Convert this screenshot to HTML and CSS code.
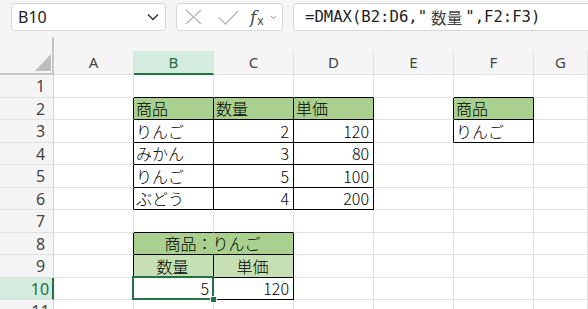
FILE: index.html
```html
<!DOCTYPE html>
<html>
<head>
    <title>DMAX</title>
    <link rel="stylesheet" href="styles.css">
</head>
<body>
    <div class="toolbar">
        <div class="namebox">
            <span class="ref">B10</span>
            <svg class="chev" width="12" height="8" viewBox="0 0 12 8"><path d="M1 1.5 6 6.5 11 1.5"/></svg>
        </div>
        <div class="fxbox">
            <svg class="ico cancel" width="17" height="16" viewBox="0 0 17 16"><path d="M1 1 16 15M16 1 1 15"/></svg>
            <svg class="ico ok" width="21" height="15" viewBox="0 0 21 15"><path d="M1 7.5 7.5 14 20 1"/></svg>
            <span class="fx"><i>f</i><span class="fx-x">x</span></span>
            <svg class="mini" width="7" height="5" viewBox="0 0 7 5"><path d="M1 1 3.5 3.5 6 1"/></svg>
        </div>
        <div class="formula">=DMAX(B2:D6,"<span class="wide">数量</span>",F2:F3)</div>
    </div>

    <div class="sheet">
        <!-- column headers -->
        <div class="c corner"><svg width="16" height="17" viewBox="0 0 16 17"><polygon points="16,0 16,17 0,17"/></svg></div>
        <div class="c ch">A</div>
        <div class="c ch sel">B</div>
        <div class="c ch">C</div>
        <div class="c ch">D</div>
        <div class="c ch">E</div>
        <div class="c ch">F</div>
        <div class="c ch">G</div>

        <!-- 1 -->
        <div class="c rh">1</div>
        <div class="c"></div>
        <div class="c bb"></div>
        <div class="c bb"></div>
        <div class="c bb"></div>
        <div class="c"></div>
        <div class="c bb"></div>
        <div class="c"></div>

        <!-- 2 -->
        <div class="c rh">2</div>
        <div class="c br"></div>
        <div class="c bx hd">商品</div>
        <div class="c bx hd">数量</div>
        <div class="c bx hd">単価</div>
        <div class="c br"></div>
        <div class="c bx hd">商品</div>
        <div class="c"></div>

        <!-- 3 -->
        <div class="c rh">3</div>
        <div class="c br"></div>
        <div class="c bx">りんご</div>
        <div class="c bx num">2</div>
        <div class="c bx num">120</div>
        <div class="c br"></div>
        <div class="c bx">りんご</div>
        <div class="c"></div>

        <!-- 4 -->
        <div class="c rh">4</div>
        <div class="c br"></div>
        <div class="c bx">みかん</div>
        <div class="c bx num">3</div>
        <div class="c bx num">80</div>
        <div class="c"></div>
        <div class="c"></div>
        <div class="c"></div>

        <!-- 5 -->
        <div class="c rh">5</div>
        <div class="c br"></div>
        <div class="c bx">りんご</div>
        <div class="c bx num">5</div>
        <div class="c bx num">100</div>
        <div class="c"></div>
        <div class="c"></div>
        <div class="c"></div>

        <!-- 6 -->
        <div class="c rh">6</div>
        <div class="c br"></div>
        <div class="c bx">ぶどう</div>
        <div class="c bx num">4</div>
        <div class="c bx num">200</div>
        <div class="c"></div>
        <div class="c"></div>
        <div class="c"></div>

        <!-- 7 -->
        <div class="c rh">7</div>
        <div class="c"></div>
        <div class="c bb"></div>
        <div class="c bb"></div>
        <div class="c"></div>
        <div class="c"></div>
        <div class="c"></div>
        <div class="c"></div>

        <!-- 8 -->
        <div class="c rh">8</div>
        <div class="c br"></div>
        <div class="c bx hd mid span2">商品：りんご</div>
        <div class="c"></div>
        <div class="c"></div>
        <div class="c"></div>
        <div class="c"></div>

        <!-- 9 -->
        <div class="c rh">9</div>
        <div class="c br"></div>
        <div class="c bx sub mid">数量</div>
        <div class="c bx sub mid">単価</div>
        <div class="c"></div>
        <div class="c"></div>
        <div class="c"></div>
        <div class="c"></div>

        <!-- 10 -->
        <div class="c rh sel">10</div>
        <div class="c br"></div>
        <div class="c bx num cur">5<span class="handle"></span></div>
        <div class="c bx num">120</div>
        <div class="c"></div>
        <div class="c"></div>
        <div class="c"></div>
        <div class="c"></div>

        <!-- 11 -->
        <div class="c rh">11</div>
        <div class="c"></div>
        <div class="c"></div>
        <div class="c"></div>
        <div class="c"></div>
        <div class="c"></div>
        <div class="c"></div>
        <div class="c"></div>
    </div>
</body>
</html>
```

FILE: styles.css
```css
body {
    margin: 0;
    width: 588px;
    height: 309px;
    overflow: hidden;
    background: #f5f5f5;
    font-family: "Noto Sans", sans-serif;
}
.toolbar {
    display: flex;
    height: 51px;
    box-sizing: border-box;
    padding: 3px 0 0 11px;
}
.namebox,
.fxbox,
.formula {
    height: 28px;
    box-sizing: border-box;
    background: #fff;
    border: 1px solid #d6d6d6;
    border-radius: 4px;
    display: flex;
    align-items: center;
}
.namebox {
    width: 155px;
    padding: 0 6px;
}
.ref {
    font-size: 16px;
    color: #222;
}
.chev {
    margin-left: auto;
    fill: none;
    stroke: #333;
    stroke-width: 1.5;
}
.fxbox {
    width: 107px;
    margin-left: 10px;
    padding-left: 8px;
}
.ico {
    fill: none;
    stroke: #b8b8b8;
    stroke-width: 1.4;
}
.ok {
    margin-left: 16px;
}
.fx {
    margin-left: 11px;
    color: #444;
    display: flex;
    align-items: baseline;
}
.fx i {
    font-family: "DejaVu Serif", serif;
    font-size: 17px;
}
.fx-x {
    font-size: 12px;
    margin-left: 1px;
    position: relative;
    top: 2px;
}
.mini {
    margin-left: 6px;
    fill: none;
    stroke: #999;
    stroke-width: 1;
}
.formula {
    flex: 1;
    margin-left: 10px;
    margin-right: -20px;
    padding-left: 11px;
    font-family: "DejaVu Sans Mono", "Noto Sans CJK JP", monospace;
    font-size: 15.6px;
    color: #222;
    white-space: pre;
}
.wide {
    font-family: "Noto Sans CJK JP", sans-serif;
    padding: 0 3px 0 4px;
    color: #444;
}

.sheet {
    display: grid;
    grid-template-columns: 54px repeat(6, 80px) 1fr;
    grid-template-rows: 24px repeat(5, 23px 22px) 23px;
}
.c {
    box-sizing: border-box;
    min-width: 0;
    border-right: 1px solid #e1e1e1;
    border-bottom: 1px solid #e1e1e1;
    background: #fff;
    display: flex;
    align-items: flex-end;
    padding: 0 4px 3px 2px;
    font-family: "Noto Sans CJK JP", sans-serif;
    font-size: 16px;
    font-weight: 300;
    line-height: 1;
    white-space: nowrap;
    color: #000;
}
.ch {
    background: #f5f5f5;
    justify-content: center;
    align-items: center;
    padding: 0;
    font-family: "Noto Sans", sans-serif;
    font-size: 15px;
    font-weight: 400;
    color: #444;
}
.ch.sel {
    background: #d3ecdd;
    color: #1e6b41;
    border-bottom: 2px solid #217346;
}
.corner {
    position: relative;
    background: #f5f5f5;
    border-right: 2px solid #c6c6c6;
    border-bottom: 2px solid #c6c6c6;
    justify-content: flex-end;
    padding: 0 1px 2px 0;
    fill: #bdbdbd;
}
.corner::before {
    content: "";
    position: absolute;
    right: -2px;
    bottom: 100%;
    width: 2px;
    height: 14px;
    background: #c6c6c6;
}
.rh {
    background: #f5f5f5;
    border-right-color: #d6d6d6;
    justify-content: center;
    align-items: center;
    padding: 0 0 0 28px;
    font-family: "Noto Sans", sans-serif;
    font-size: 16px;
    font-weight: 400;
    color: #444;
}
.rh.sel {
    background: #d3ecdd;
    color: #1e6b41;
    border-right: 2px solid #217346;
}

.num {
    justify-content: flex-end;
}
.mid {
    justify-content: center;
}
.span2 {
    grid-column: span 2;
}
.hd {
    background: #a9d08e;
}
.sub {
    background: #c6e0b4;
}
.bx {
    border-right-color: #000;
    border-bottom-color: #000;
}
.br {
    border-right-color: #000;
}
.bb {
    border-bottom-color: #000;
}

.cur {
    position: relative;
}
.cur::after {
    content: "";
    position: absolute;
    left: -2px;
    top: -2px;
    right: -1px;
    bottom: -1px;
    border: 2px solid #217346;
    z-index: 1;
}
.handle {
    position: absolute;
    right: -4px;
    bottom: -4px;
    width: 5px;
    height: 5px;
    background: #217346;
    border: 1px solid #fff;
    z-index: 2;
}
```
